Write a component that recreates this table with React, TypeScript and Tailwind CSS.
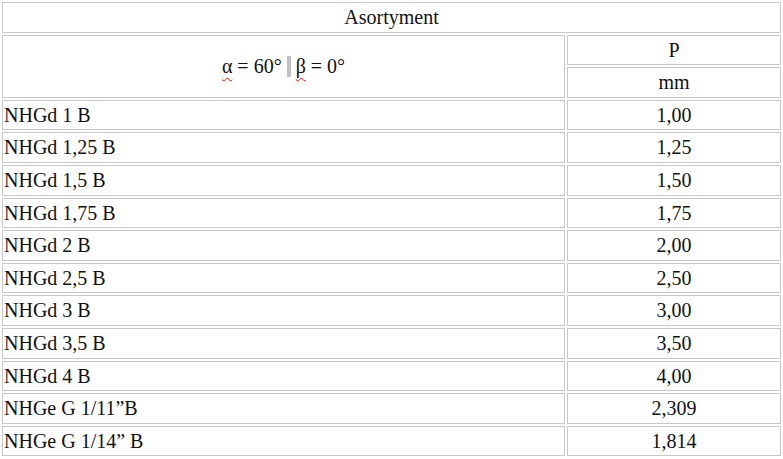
import React from "react";

const rows: [string, string][] = [
  ["NHGd 1 B", "1,00"],
  ["NHGd 1,25 B", "1,25"],
  ["NHGd 1,5 B", "1,50"],
  ["NHGd 1,75 B", "1,75"],
  ["NHGd 2 B", "2,00"],
  ["NHGd 2,5 B", "2,50"],
  ["NHGd 3 B", "3,00"],
  ["NHGd 3,5 B", "3,50"],
  ["NHGd 4 B", "4,00"],
  ["NHGe G 1/11\u201dB", "2,309"],
  ["NHGe G 1/14\u201d B", "1,814"],
];

const cell = "border border-[#c8c8c8] px-px py-0 leading-[28.6px] h-[30.6px]";

export default function App() {
  return (
    <div className="bg-white w-[783px] h-[459px] overflow-hidden text-[#111]" style={{ fontFamily: '"Liberation Serif", "Times New Roman", serif' }}>
      <table className="w-[783px] border-separate border-spacing-[2px] text-[20px] table-fixed">
        <colgroup>
          <col />
          <col className="w-[214px]" />
        </colgroup>
        <tbody>
          <tr>
            <td colSpan={2} className={`${cell} text-center`}>Asortyment</td>
          </tr>
          <tr>
            <td rowSpan={2} className="border border-[#c8c8c8] px-px py-0 text-center align-middle">
              <span className="underline decoration-wavy decoration-[#e81010] decoration-1 underline-offset-[4px]">α</span>
              {" = 60° "}
              <span className="inline-block w-[4px] h-[21px] bg-[#c0c0c0] align-[-4px]"></span>
              {" "}
              <span className="underline decoration-wavy decoration-[#e81010] decoration-1 underline-offset-[4px]">β</span>
              {" = 0°"}
            </td>
            <td className={`${cell} text-center`}>P</td>
          </tr>
          <tr>
            <td className={`${cell} text-center`}>mm</td>
          </tr>
          {rows.map(([a, b]) => (
            <tr key={a}>
              <td className={`${cell} text-left`}>{a}</td>
              <td className={`${cell} text-center`}>{b}</td>
            </tr>
          ))}
        </tbody>
      </table>
    </div>
  );
}
